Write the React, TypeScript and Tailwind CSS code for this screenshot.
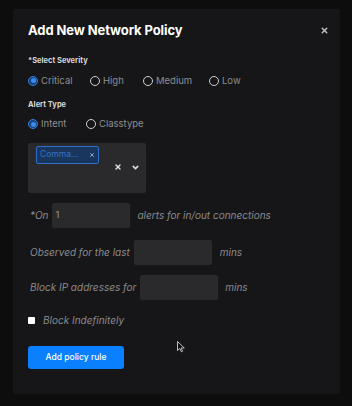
import { X, ChevronDown } from 'lucide-react';

function Radio({ label, checked }: { label: string; checked?: boolean }) {
  return (
    <label className="flex items-center gap-[3px]">
      {checked ? (
        <span className="w-[10px] h-[10px] rounded-full border-[1.5px] border-[#2f7de1] bg-[#1b3f73] flex items-center justify-center">
          <span className="w-[5px] h-[5px] rounded-full bg-[#3b8bf0]" />
        </span>
      ) : (
        <span className="w-[10px] h-[10px] rounded-full border-[1.5px] border-[#cfcfcf]" />
      )}
      <span className="text-[9.5px] text-[#8e8e90]">{label}</span>
    </label>
  );
}

function Box({ w, value }: { w: string; value?: string }) {
  return (
    <div className={`${w} h-[25px] bg-[#2a2a2c] rounded-[2px] flex items-center px-[3px] text-[9.5px] text-[#9a9a9c] not-italic`}>
      {value}
    </div>
  );
}

export default function App() {
  return (
    <div className="w-[352px] h-[406px] bg-[#0d0d0e] pt-[9px] px-[13px] font-['Inter',sans-serif] relative">
      <div className="w-[327px] h-[385px] bg-[#161618] rounded-[3px] px-[15px] pt-[12px]">
        {/* Header */}
        <div className="flex items-center justify-between">
          <h2 className="text-[13px] font-bold text-white tracking-[-0.1px]">Add New Network Policy</h2>
          <X className="w-[9px] h-[9px] text-[#bdbdbd] mr-[-4px]" strokeWidth={4} />
        </div>

        {/* Severity */}
        <div className="mt-[14px] text-[7.5px] font-bold text-[#d6d6d6]">*Select Severity</div>
        <div className="mt-[8px] flex items-center">
          <div className="w-[62px]"><Radio label="Critical" checked /></div>
          <div className="w-[53px]"><Radio label="High" /></div>
          <div className="w-[66px]"><Radio label="Medium" /></div>
          <Radio label="Low" />
        </div>

        {/* Alert type */}
        <div className="mt-[11px] text-[7.5px] font-bold text-[#d6d6d6]">Alert Type</div>
        <div className="mt-[7px] flex items-center">
          <div className="w-[58px]"><Radio label="Intent" checked /></div>
          <Radio label="Classtype" />
        </div>

        {/* Select */}
        <div className="mt-[11px] w-[118px] h-[50px] bg-[#2a2a2c] rounded-[2px] flex pl-[8px] pr-[5px] pt-[3px]">
          <div className="flex-1">
            <div className="w-[63px] h-[18px] border border-[#2f6fc8] bg-[#18365e] rounded-[2px] flex items-center justify-between px-[3px]">
              <span className="text-[8.5px] text-[#3574c4]">Comma...</span>
              <X className="w-[6px] h-[6px] text-[#8aa6cc]" strokeWidth={4} />
            </div>
          </div>
          <div className="flex items-center gap-[9px] pb-[4px] pr-[1px]">
            <X className="w-[8px] h-[8px] text-[#e2e2e2]" strokeWidth={4} />
            <ChevronDown className="w-[9px] h-[9px] text-[#e2e2e2]" strokeWidth={4} />
          </div>
        </div>

        {/* Inputs */}
        <div className="italic text-[10px] text-[#8b8b8d] pl-[2px]">
          <div className="mt-[10px] flex items-center gap-[4px]">
            <span>*On</span>
            <Box w="w-[78px]" value="1" />
            <span className="ml-[3px]">alerts for in/out connections</span>
          </div>
          <div className="mt-[12px] flex items-center gap-[4px]">
            <span>Observed for the last</span>
            <Box w="w-[78px]" />
            <span className="ml-[4px]">mins</span>
          </div>
          <div className="mt-[10px] flex items-center gap-[4px]">
            <span>Block IP addresses for</span>
            <Box w="w-[78px]" />
            <span className="ml-[3px]">mins</span>
          </div>
        </div>

        {/* Checkbox */}
        <div className="mt-[13px] flex items-center gap-[8px]">
          <span className="w-[7px] h-[7px] bg-white rounded-[1px]" />
          <span className="italic text-[10px] text-[#8b8b8d]">Block Indefinitely</span>
        </div>

        <button className="mt-[18px] w-[96px] h-[23px] bg-[#0a80ff] rounded-[3px] text-[8.5px] font-medium text-white">
          Add policy rule
        </button>
      </div>

      {/* mouse cursor */}
      <svg className="absolute left-[177px] top-[341px]" width="8" height="12" viewBox="0 0 8 12">
        <path d="M0.5 0.5 L0.5 9.5 L2.8 7.4 L4.3 10.8 L5.6 10.2 L4.2 7 L7.3 7 Z" fill="#111" stroke="#cfcfcf" strokeWidth="0.9" />
      </svg>
    </div>
  );
}
